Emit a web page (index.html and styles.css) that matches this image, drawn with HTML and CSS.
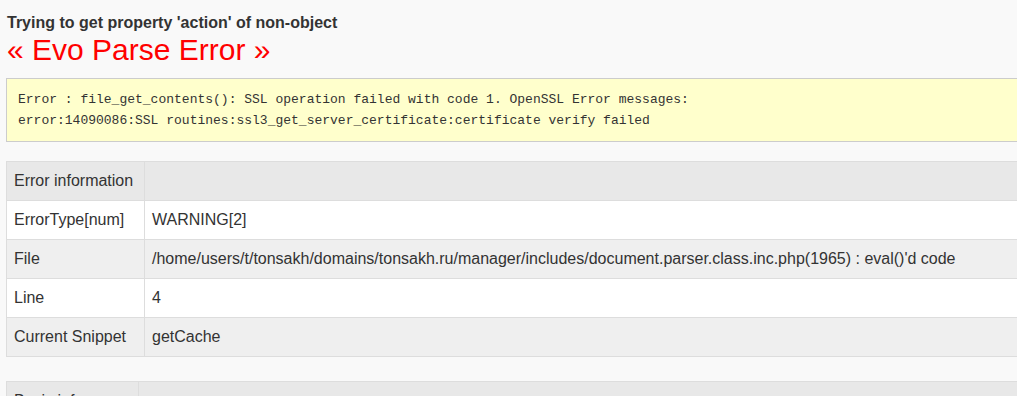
FILE: index.html
```html
<!DOCTYPE html>
<html lang="en">
<head>
    <meta charset="UTF-8">
    <meta name="viewport" content="width=device-width, initial-scale=1.0">
    <title>Evo Parse Error</title>
    <link rel="stylesheet" href="styles.css">
</head>
<body>
    <div class="page">
        <h3 class="notice">Trying to get property 'action' of non-object</h3>
        <h2 class="parse-title">&laquo; Evo Parse Error &raquo;</h2>
        <pre class="error-box">Error : file_get_contents(): SSL operation failed with code 1. OpenSSL Error messages:
error:14090086:SSL routines:ssl3_get_server_certificate:certificate verify failed</pre>

        <table class="info-table">
            <tr class="head-row">
                <td class="label">Error information</td>
                <td></td>
            </tr>
            <tr>
                <td class="label">ErrorType[num]</td>
                <td>WARNING[2]</td>
            </tr>
            <tr class="alt">
                <td class="label">File</td>
                <td>/home/users/t/tonsakh/domains/tonsakh.ru/manager/includes/document.parser.class.inc.php(1965) : eval()'d code</td>
            </tr>
            <tr>
                <td class="label">Line</td>
                <td>4</td>
            </tr>
            <tr class="alt">
                <td class="label">Current Snippet</td>
                <td>getCache</td>
            </tr>
        </table>

        <table class="info-table basic">
            <tr class="head-row">
                <td class="label">Basic info</td>
                <td></td>
            </tr>
        </table>
    </div>
</body>
</html>
```

FILE: styles.css
```css
html {
    overflow: hidden;
}
body {
    margin: 0;
    background-color: #f9f9f9;
    color: #333333;
    font-family: "Liberation Sans", Arial, sans-serif;
}
.page {
    width: 1100px;
    padding: 12px 0 0 6px;
}
.notice {
    margin: 0 0 0 1px;
    font-size: 16px;
    font-weight: bold;
    line-height: 21px;
    color: #333333;
}
.parse-title {
    margin: 0 0 0 1px;
    font-size: 30px;
    font-weight: normal;
    line-height: 34px;
    color: #ff0000;
}
.error-box {
    margin: 11px 0 0 0;
    padding: 10px 11px;
    background-color: #ffffcc;
    border: 1px solid #cccccc;
    font-family: "Liberation Mono", "Courier New", monospace;
    font-size: 13px;
    line-height: 21px;
    color: #333333;
}
.info-table {
    width: 100%;
    margin-top: 19px;
    border-collapse: collapse;
    background-color: #ffffff;
    font-size: 16px;
    line-height: 22px;
}
.info-table td {
    padding: 8px 7px;
    border: 1px solid #dddddd;
    white-space: nowrap;
}
.info-table .label {
    width: 123px;
}
.info-table .head-row {
    background-color: #e8e8e8;
}
.info-table .alt {
    background-color: #efefef;
}
.basic {
    margin-top: 24px;
}
.basic .label {
    width: 117px;
}
```
